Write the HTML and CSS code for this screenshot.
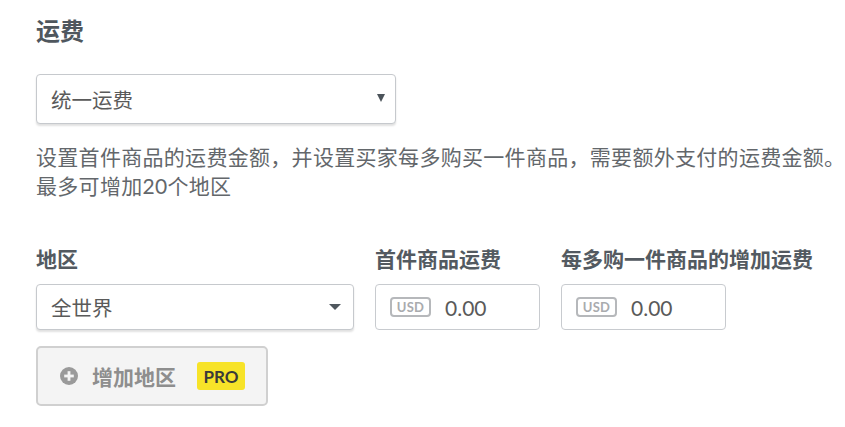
FILE: index.html
```html
<!DOCTYPE html>
<html lang="zh-CN">
<head>
<meta charset="utf-8">
<title>运费</title>
<link rel="stylesheet" href="styles.css">
</head>
<body>
<main class="page">
  <h2 class="title">运费</h2>
  <div class="select select-main">
    <span class="select-text">统一运费</span>
    <span class="arrow-solid"></span>
  </div>
  <p class="desc">设置首件商品的运费金额，并设置买家每多购买一件商品，需要额外支付的运费金额。<br>最多可增加20个地区</p>
  <div class="grid">
    <div class="label">地区</div>
    <div class="label">首件商品运费</div>
    <div class="label">每多购一件商品的增加运费</div>
    <div class="select select-region">
      <span class="select-text">全世界</span>
      <span class="caret"></span>
    </div>
    <div class="money">
      <span class="usd">USD</span>
      <span class="amount">0.00</span>
    </div>
    <div class="money">
      <span class="usd">USD</span>
      <span class="amount">0.00</span>
    </div>
  </div>
  <button class="add-btn" type="button">
    <svg class="plus" width="18" height="18" viewBox="0 0 18 18"><circle cx="9" cy="9" r="9" fill="#9a9a9a"/><rect x="4.2" y="7.6" width="9.6" height="2.8" fill="#f4f4f4"/><rect x="7.6" y="4.2" width="2.8" height="9.6" fill="#f4f4f4"/></svg>
    <span class="add-text">增加地区</span>
    <span class="pro">PRO</span>
  </button>
</main>
</body>
</html>
```
FILE: styles.css
```css
* { box-sizing: border-box; }
body {
  margin: 0;
  background: #fff;
  font-family: Lato, "Noto Sans CJK SC", sans-serif;
  color: #555b61;
}
.page {
  padding: 16px 0 0 36px;
}
.title {
  margin: 0;
  font-size: 24px;
  line-height: 30px;
  font-weight: 700;
  color: #4f575e;
}
.select {
  display: flex;
  align-items: center;
  justify-content: space-between;
  background: #fff;
  border: 1px solid #c6c9cd;
  border-radius: 4px;
  box-shadow: 0 2px 2px rgba(0,0,0,0.12);
}
.select-main {
  margin-top: 28px;
  width: 360px;
  height: 50px;
  padding: 0 10px 0 14px;
}
.select-text {
  font-size: 20.5px;
  color: #5a5a5a;
}
.arrow-solid {
  width: 0;
  height: 0;
  border-left: 4px solid transparent;
  border-right: 4px solid transparent;
  border-top: 8px solid #4b535a;
  margin-bottom: 2px;
}
.desc {
  margin: 18px 0 0;
  font-size: 21px;
  letter-spacing: 0.3px;
  line-height: 29px;
  color: #63676b;
  white-space: nowrap;
}
.grid {
  margin-top: 44px;
  display: grid;
  grid-template-columns: 318px 165px 165px;
  column-gap: 21px;
  row-gap: 10px;
}
.label {
  font-size: 21px;
  line-height: 30px;
  font-weight: 700;
  color: #535a61;
  white-space: nowrap;
}
.select-region {
  height: 46px;
  padding: 0 12px 0 14px;
}
.caret {
  width: 0;
  height: 0;
  border-left: 6px solid transparent;
  border-right: 6px solid transparent;
  border-top: 6px solid #4f575e;
}
.money {
  display: flex;
  align-items: center;
  height: 46px;
  border: 1px solid #c8cbcf;
  border-radius: 4px;
  padding-left: 14px;
  background: #fff;
}
.usd {
  width: 41px;
  height: 20px;
  border: 2px solid #b6b8bb;
  border-radius: 4px;
  font-size: 13px;
  font-weight: 700;
  color: #a9abae;
  display: flex;
  align-items: center;
  justify-content: center;
  letter-spacing: 0.3px;
}
.amount {
  margin-left: 14px;
  font-size: 21px;
  color: #5a5a5a;
}
.add-btn {
  margin-top: 16px;
  width: 232px;
  height: 60px;
  display: flex;
  align-items: center;
  padding: 0 0 0 22px;
  background: #f4f4f4;
  border: 2px solid #d0d0d0;
  border-radius: 5px;
  font-family: inherit;
}
.plus { display: block; }
.add-text {
  margin-left: 14px;
  font-size: 21px;
  font-weight: 700;
  color: #8e8e8e;
}
.pro {
  margin-left: 21px;
  width: 48px;
  height: 28px;
  background: #f7e328;
  border-radius: 3px;
  display: flex;
  align-items: center;
  justify-content: center;
  font-size: 17px;
  font-weight: 700;
  color: #3a3a3a;
}
```
